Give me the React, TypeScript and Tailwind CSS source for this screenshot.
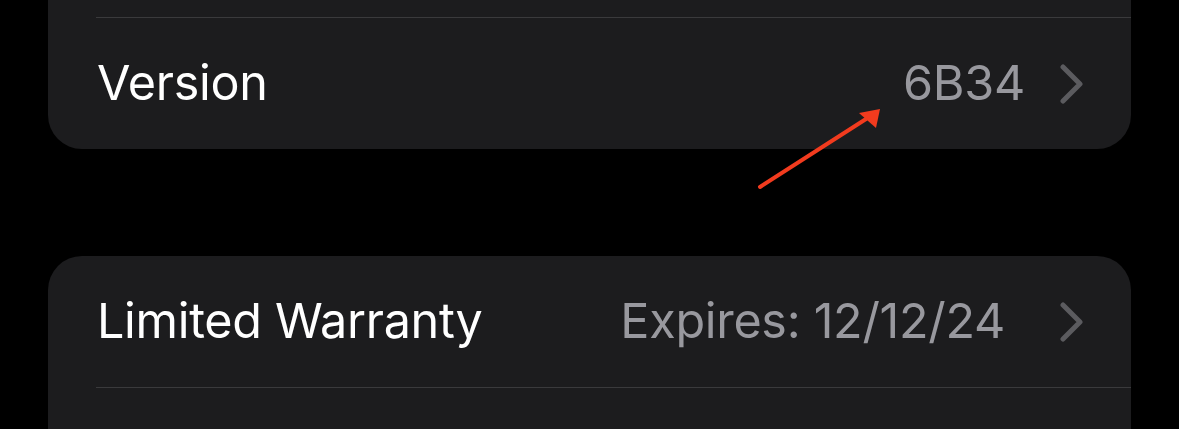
type RowProps = { label: string; value: string; valueGap: string };

function Chevron() {
  return (
    <svg className="shrink-0" width="24" height="40" viewBox="0 0 24 40" fill="none">
      <path d="M3 3 L20 20 L3 37" stroke="#5b5b5f" strokeWidth="5" strokeLinecap="round" strokeLinejoin="round" />
    </svg>
  );
}

function Row({ label, value, valueGap }: RowProps) {
  return (
    <div className="flex h-[131px] items-center pl-[49px] pr-[47px]">
      <span className="text-[48.5px] tracking-[-0.3px] text-white">{label}</span>
      <span className={`ml-auto text-[48.5px] tracking-[-0.3px] text-[#98989e] ${valueGap}`}>{value}</span>
      <Chevron />
    </div>
  );
}

export default function App() {
  return (
    <div
      className="relative h-[429px] w-[1179px] overflow-hidden bg-black"
      style={{ fontFamily: 'Inter, "Noto Sans", sans-serif' }}
    >
      <div className="mx-[48px] flex flex-col">
        <section className="rounded-b-[34px] bg-[#1c1c1e]">
          <div className="h-[17px]" />
          <div className="ml-[48px] h-px bg-[#3a3a3c]" />
          <Row label="Version" value="6B34" valueGap="mr-[35px]" />
        </section>

        <section className="mt-[107px] h-[200px] rounded-t-[34px] bg-[#1c1c1e]">
          <Row label="Limited Warranty" value="Expires: 12/12/24" valueGap="mr-[55px]" />
          <div className="ml-[48px] h-px bg-[#3a3a3c]" />
        </section>
      </div>

      <svg className="absolute left-0 top-0" width="1179" height="429" viewBox="0 0 1179 429">
        <line x1="760" y1="187" x2="866" y2="119" stroke="#f23b1e" strokeWidth="4" strokeLinecap="round" />
        <polygon points="880,109 859,113 876,128" fill="#f23b1e" />
      </svg>
    </div>
  );
}
